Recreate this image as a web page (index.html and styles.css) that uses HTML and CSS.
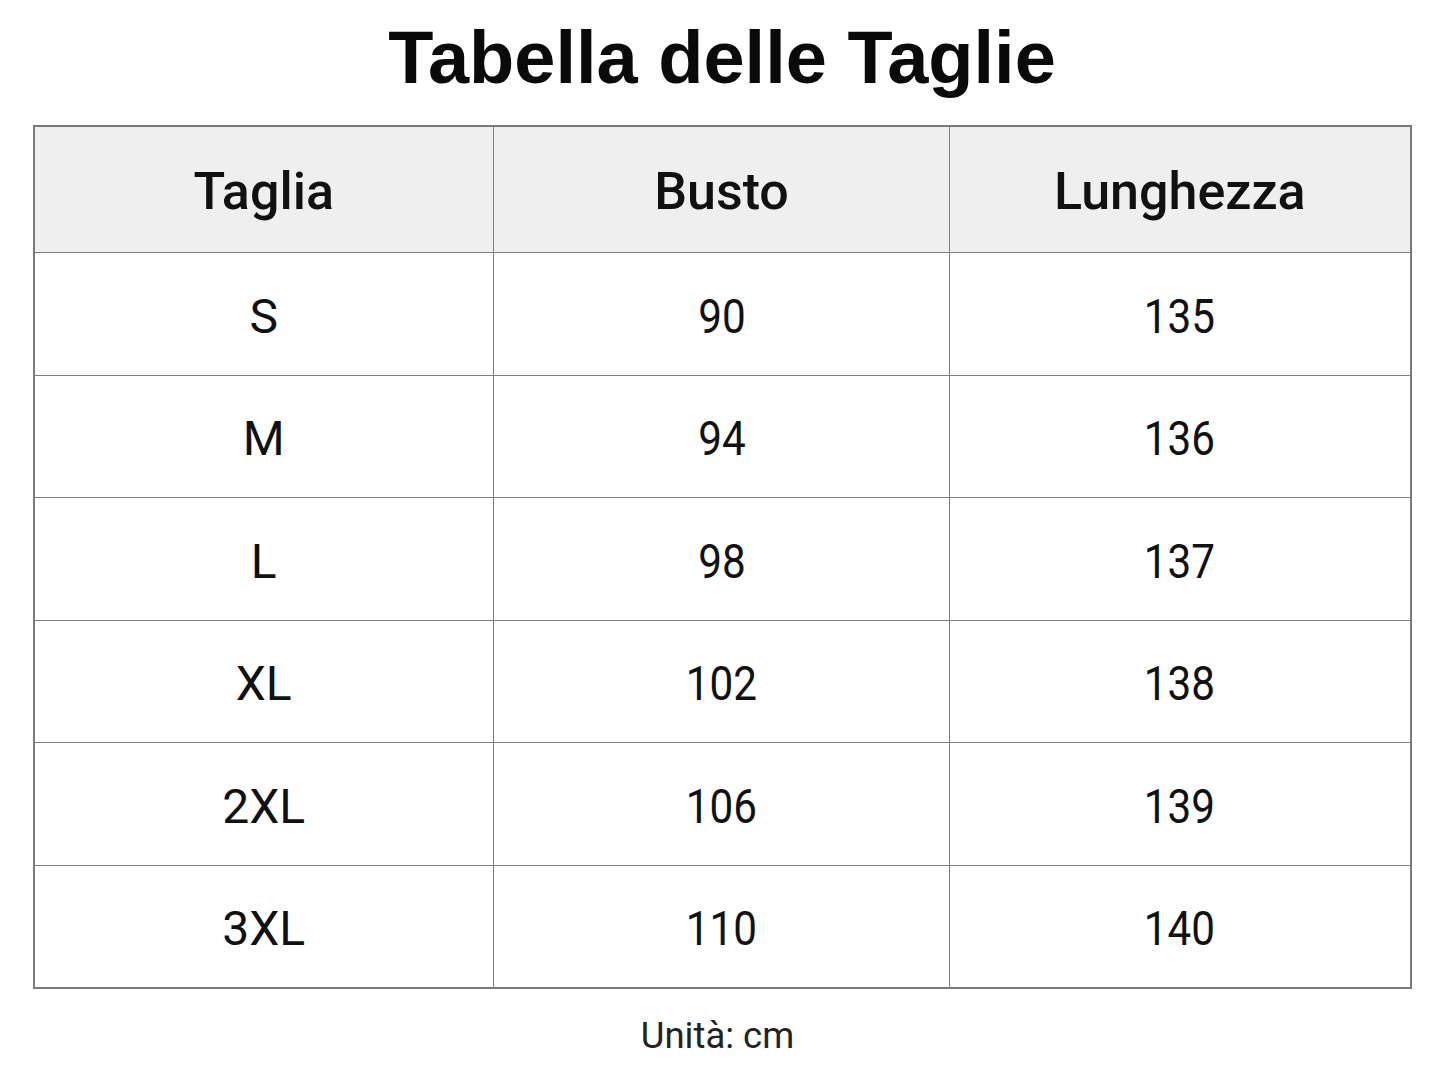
FILE: index.html
```html
<!DOCTYPE html>
<html lang="it">
<head>
<meta charset="utf-8">
<title>Tabella delle Taglie</title>
<link rel="stylesheet" href="styles.css">
</head>
<body>
<main class="page">
  <h1 class="title">Tabella delle Taglie</h1>
  <table class="sizes">
    <colgroup>
      <col class="c1"><col class="c2"><col class="c3">
    </colgroup>
    <thead>
      <tr><th>Taglia</th><th>Busto</th><th>Lunghezza</th></tr>
    </thead>
    <tbody>
      <tr><td>S</td><td><span class="num">90</span></td><td><span class="num">135</span></td></tr>
      <tr><td>M</td><td><span class="num">94</span></td><td><span class="num">136</span></td></tr>
      <tr><td>L</td><td><span class="num">98</span></td><td><span class="num">137</span></td></tr>
      <tr><td>XL</td><td><span class="num">102</span></td><td><span class="num">138</span></td></tr>
      <tr><td>2XL</td><td><span class="num">106</span></td><td><span class="num">139</span></td></tr>
      <tr><td>3XL</td><td><span class="num">110</span></td><td><span class="num">140</span></td></tr>
    </tbody>
  </table>
  <p class="unit">Unità: cm</p>
</main>
</body>
</html>
```
FILE: styles.css
```css
html, body {
  margin: 0;
  padding: 0;
  background: #ffffff;
}
.page {
  display: flex;
  flex-direction: column;
  align-items: center;
  padding: 0 34px 0 33px;
  font-family: Roboto, "Liberation Sans", sans-serif;
  color: #111;
}
.title {
  margin: 0;
  height: 125px;
  display: flex;
  align-items: center;
  font-family: "Liberation Sans", Arial, sans-serif;
  font-weight: 700;
  font-size: 74px;
  letter-spacing: 0;
  color: #0a0a0a;
  padding-bottom: 10px;
  box-sizing: border-box;
}
.sizes {
  width: 1377px;
  border-collapse: collapse;
  table-layout: fixed;
  border: 2px solid #7a7a7a;
}
.c1 { width: 460px; }
.c2 { width: 456px; }
.c3 { width: 461px; }
.sizes th, .sizes td {
  border: 1.5px solid #7f7f7f;
  text-align: center;
  vertical-align: middle;
  padding: 0;
}
.sizes th {
  height: 122px;
  background: #efefef;
  font-weight: 500;
  font-size: 52px;
  color: #111;
  padding-top: 3px;
}
.sizes td {
  height: 116.5px;
  font-weight: 400;
  font-size: 48px;
  color: #111;
  padding-top: 5px;
}
.num {
  display: inline-block;
  transform: scaleX(0.88);
}
.unit {
  margin: 25px 0 0;
  padding-right: 9px;
  font-size: 36.5px;
  color: #222;
}
```
